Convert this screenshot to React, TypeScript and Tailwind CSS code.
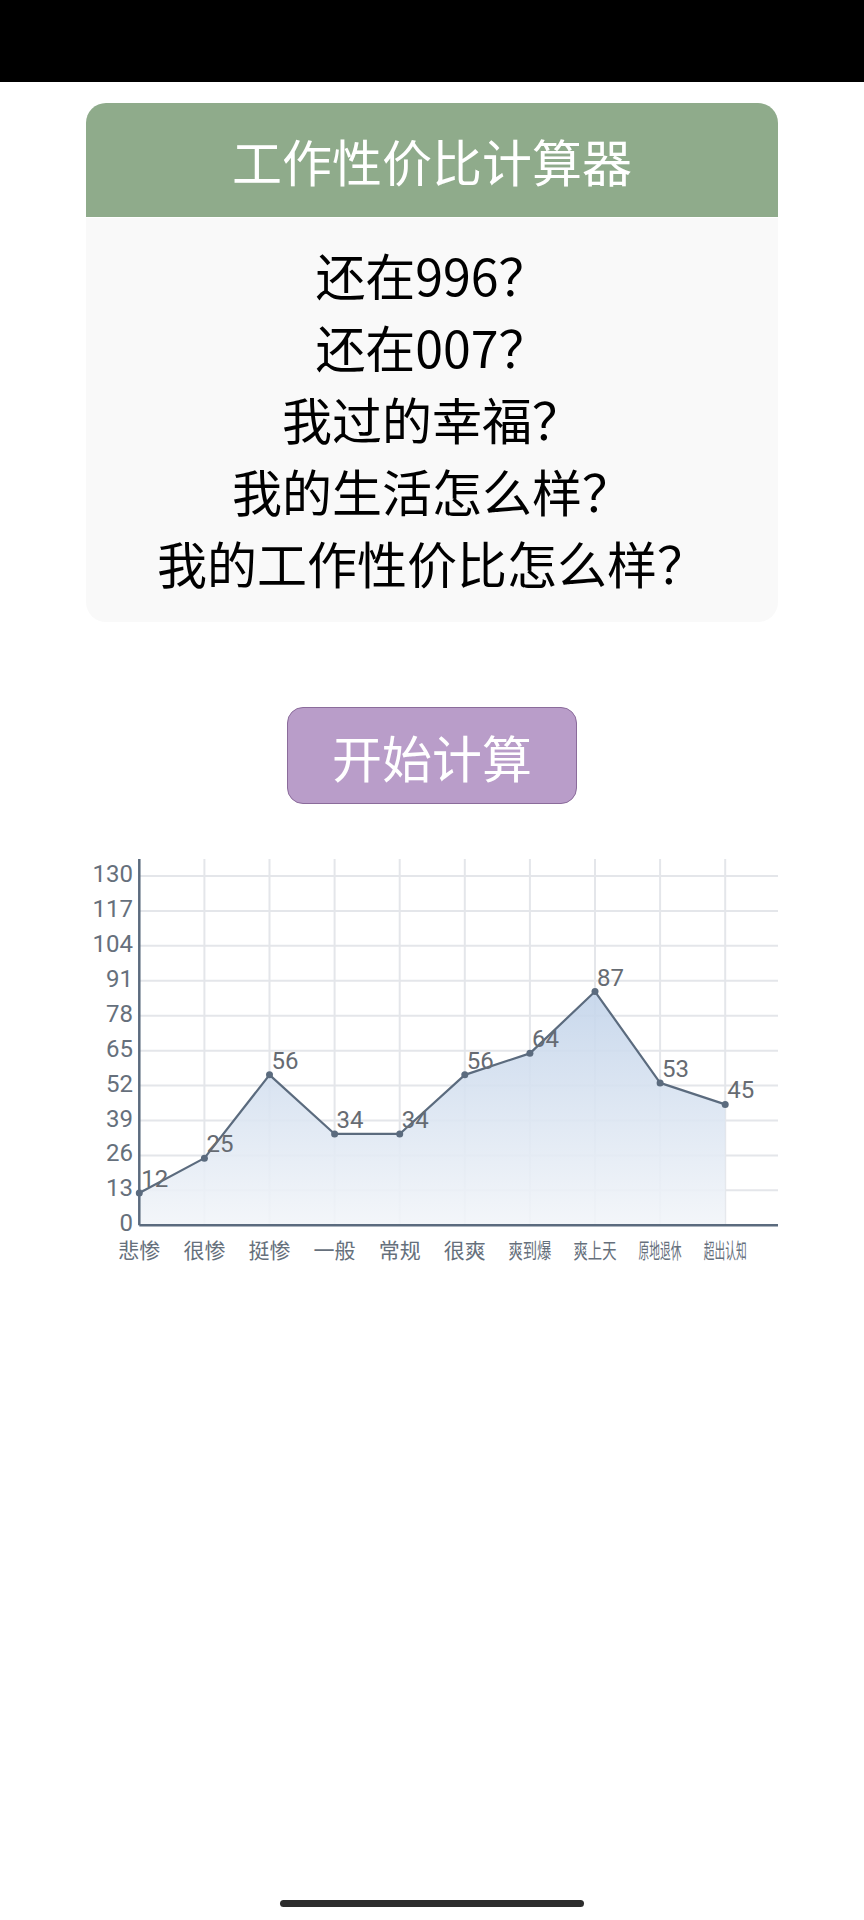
import React from "react";

const cjk = { fontFamily: '"Noto Sans CJK SC", "Noto Sans", sans-serif' };

const lines = ["还在996？", "还在007？", "我过的幸福？", "我的生活怎么样？", "我的工作性价比怎么样？"];

const data = [
  { label: "悲惨", v: 12 },
  { label: "很惨", v: 25 },
  { label: "挺惨", v: 56 },
  { label: "一般", v: 34 },
  { label: "常规", v: 34 },
  { label: "很爽", v: 56 },
  { label: "爽到爆", v: 64 },
  { label: "爽上天", v: 87 },
  { label: "原地退休", v: 53 },
  { label: "超出认知", v: 45 },
];

// chart geometry (svg sits at page y = 840)
const X0 = 139.3;
const STEP = 65.1;
const BASE = 384.3;
const TOP = 18;
const RIGHT = 778;
const PER = 349.3 / 130;

const px = (i: number) => X0 + i * STEP;
const py = (v: number) => BASE - v * PER;

function Chart() {
  const pts = data.map((d, i) => `${px(i)},${py(d.v)}`).join(" ");
  const area = `${px(0)},${BASE} ${pts} ${px(data.length - 1)},${BASE}`;
  const ticks = Array.from({ length: 11 }, (_, k) => k);

  return (
    <svg width="864" height="440" className="block" style={{ fontFamily: 'Roboto, "Noto Sans CJK SC", sans-serif' }}>
      <defs>
        <linearGradient id="fill" gradientUnits="userSpaceOnUse" x1="0" y1={py(87)} x2="0" y2={BASE}>
          <stop offset="0" stopColor="#c3d4ea" />
          <stop offset="1" stopColor="#f2f5f9" />
        </linearGradient>
      </defs>

      {/* grid */}
      {ticks.slice(1).map((k) => (
        <line key={"h" + k} x1={X0} x2={RIGHT} y1={BASE - k * 34.93} y2={BASE - k * 34.93} stroke="#e4e6ea" strokeWidth="2" />
      ))}
      {data.slice(1).map((_, i) => (
        <line key={"v" + i} x1={px(i + 1)} x2={px(i + 1)} y1={TOP} y2={BASE} stroke="#e4e6ea" strokeWidth="2" />
      ))}

      <polygon points={area} fill="url(#fill)" opacity="0.9" />
      <polyline points={pts} fill="none" stroke="#5b6b7e" strokeWidth="2.2" strokeLinejoin="round" />
      {data.map((d, i) => (
        <circle key={"c" + i} cx={px(i)} cy={py(d.v)} r="3.5" fill="#5b6b7e" />
      ))}

      {/* axes */}
      <line x1={X0} x2={X0} y1={TOP} y2={BASE} stroke="#5b6b7e" strokeWidth="2.5" />
      <line x1={X0} x2={RIGHT} y1={BASE} y2={BASE} stroke="#5b6b7e" strokeWidth="2.5" />

      {/* y labels */}
      {ticks.map((k) => (
        <text key={"y" + k} x="133" y={BASE - k * 34.93 + 6} textAnchor="end" fontSize="24" fill="#66707c">
          {k * 13}
        </text>
      ))}

      {/* value labels */}
      {data.map((d, i) => (
        <text key={"t" + i} x={px(i) + 2} y={py(d.v) - 6} fontSize="24" fill="#666b72">
          {d.v}
        </text>
      ))}

      {/* x labels */}
      {data.map((d, i) =>
        d.label.length > 2 ? (
          <text
            key={"x" + i}
            x={px(i) - 21.5}
            y="417"
            fontSize="21"
            fill="#66707c"
            textLength="43"
            lengthAdjust="spacingAndGlyphs"
            style={cjk}
          >
            {d.label}
          </text>
        ) : (
          <text key={"x" + i} x={px(i)} y="417" fontSize="21" fill="#66707c" textAnchor="middle" style={cjk}>
            {d.label}
          </text>
        )
      )}
    </svg>
  );
}

export default function App() {
  return (
    <div className="flex flex-col w-[864px] h-[1920px] bg-white overflow-hidden" style={cjk}>
      <div className="h-[82px] bg-black shrink-0" />

      {/* intro card */}
      <div className="mx-[86px] mt-[21px] rounded-[20px] overflow-hidden">
        <div className="bg-[#8fab8b] py-[21px] text-center text-white text-[50px] leading-[72px]">
          工作性价比计算器
        </div>
        <div className="bg-[#f9f9f9] border-t border-white pt-[20px] pb-[24px] text-center text-black text-[50px] leading-[72px]">
          {lines.map((l) => (
            <div key={l}>{l}</div>
          ))}
        </div>
      </div>

      <div className="flex justify-center mt-[85px]">
        <button className="w-[290px] h-[97px] rounded-[16px] border border-[#8b6c9b] bg-[#b99dc9] text-white text-[50px] leading-[72px]">
          开始计算
        </button>
      </div>

      <div className="mt-[37px]">
        <Chart />
      </div>

      <div className="mt-auto mb-[13px] mx-auto w-[304px] h-[7px] rounded-full bg-[#2d2d2d]" />
    </div>
  );
}
